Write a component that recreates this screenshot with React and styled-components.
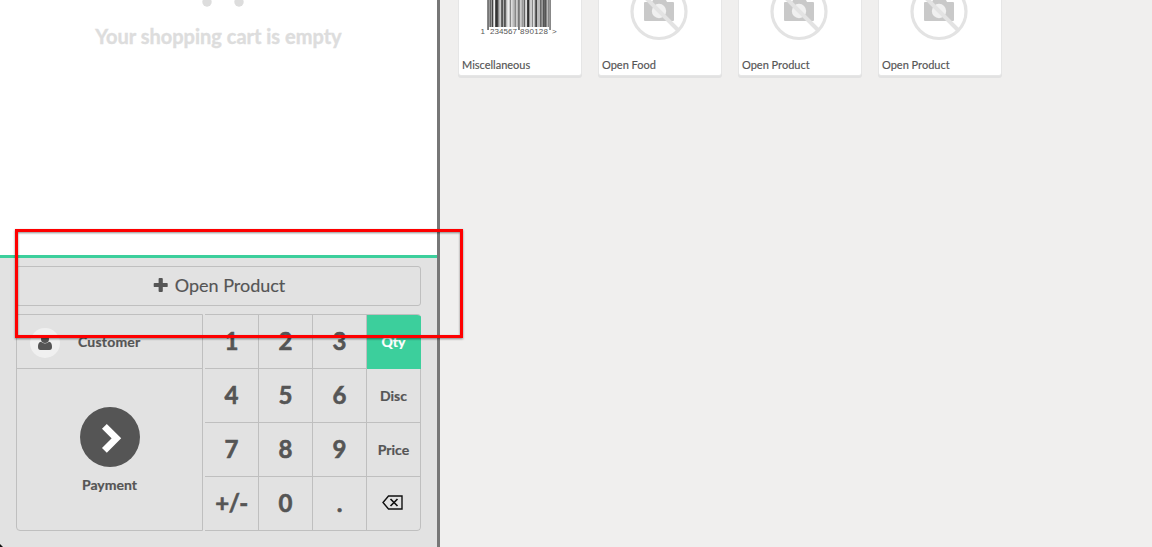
import React from "react";
import styled, { createGlobalStyle } from "styled-components";

const GlobalStyle = createGlobalStyle`
  * { box-sizing: border-box; }
  html, body { margin: 0; padding: 0; height: 100%; overflow: hidden; }
  body { font-family: Lato, "Liberation Sans", sans-serif; color: #555; background: #f0efee; }
  button { font-family: inherit; color: inherit; margin: 0; padding: 0; border: 0; background: none; }
`;

const Screen = styled.div`
  position: relative;
  display: flex;
  width: 1152px;
  height: 547px;
  overflow: hidden;
  background: #f0efee;
`;

const LeftPane = styled.section`
  flex: none;
  display: flex;
  flex-direction: column;
  width: 440px;
  border-right: 3px solid #777;
  background: #fff;
`;

const Order = styled.div`
  display: flex;
  flex-direction: column;
  align-items: center;
  height: 255px;
  color: #ddd;
`;

const CartWheels = styled.svg`
  display: block;
  width: 48px;
  height: 8px;
  margin-left: 9px;
`;

const EmptyText = styled.div`
  margin-top: 16px;
  font-size: 20px;
  line-height: 25px;
  font-weight: 700;
  white-space: nowrap;
  -webkit-text-stroke: 0.4px currentColor;
`;

const Pads = styled.div`
  flex: 1;
  display: flex;
  flex-direction: column;
  gap: 8px;
  padding: 8px 16px 16px;
  border-top: 3px solid #3ccf9c;
  background: #e2e2e2;
`;

const ControlButton = styled.button`
  display: flex;
  align-items: center;
  justify-content: center;
  gap: 7px;
  height: 40px;
  padding: 0 0 2px 1px;
  border: 1px solid #bfbfbf;
  border-radius: 3px;
  font-size: 18px;
  -webkit-text-stroke: 0.15px currentColor;
`;

const PadRow = styled.div`
  display: flex;
  gap: 2px;
`;

const ActionPad = styled.div`
  display: flex;
  flex-direction: column;
  width: 187px;
  height: 217px;
  border: 1px solid #bfbfbf;
  border-radius: 0 0 0 4px;
`;

const CustomerButton = styled.button`
  display: flex;
  align-items: center;
  height: 54px;
  padding-left: 13px;
  gap: 18px;
  border-bottom: 1px solid #bfbfbf;
  font-size: 14px;
  font-weight: 700;
  letter-spacing: 0.2px;
  -webkit-text-stroke: 0.2px currentColor;
`;

const Avatar = styled.span`
  display: flex;
  align-items: center;
  justify-content: center;
  width: 30px;
  height: 30px;
  margin-top: 2px;
  border-radius: 50%;
  background: #f0f0f0;
`;

const PaymentButton = styled.button`
  flex: 1;
  display: flex;
  flex-direction: column;
  align-items: center;
  padding-top: 38px;
  font-size: 14px;
  line-height: 18px;
  font-weight: 700;
  -webkit-text-stroke: 0.2px currentColor;
`;

const PayCircle = styled.span`
  display: block;
  width: 60px;
  height: 60px;
  margin-bottom: 9px;
  border-radius: 50%;
  background: #555;
`;

const NumPad = styled.div`
  display: grid;
  grid-template-columns: repeat(4, 54px);
  grid-auto-rows: 54px;
  height: 217px;
  border-top: 1px solid #bfbfbf;
  border-radius: 0 4px 4px 0;
  overflow: hidden;
`;

const Key = styled.button`
  display: flex;
  align-items: center;
  justify-content: center;
  padding-bottom: ${(p) => (p.$mode ? "0" : "2px")};
  border: solid ${(p) => (p.$selected ? "#3ccf9c" : "#bfbfbf")};
  border-width: 0 1px 1px 0;
  border-radius: ${(p) => p.$radius || "0"};
  background: ${(p) => (p.$selected ? "#3ccf9c" : "transparent")};
  color: ${(p) => (p.$selected ? "#fff" : "#555")};
  font-size: ${(p) => (p.$mode ? "14px" : "24px")};
  font-weight: 700;
  letter-spacing: ${(p) => (p.$tight ? "-0.6px" : "normal")};
  -webkit-text-stroke: ${(p) => (p.$mode ? "0.2px" : "0.6px")} currentColor;
`;

const EraseIcon = styled.svg`
  display: block;
  width: 21px;
  height: 15px;
  margin: 0 2px 2px 0;
`;

const Products = styled.section`
  flex: 1;
  display: flex;
  align-items: flex-start;
  gap: 18px;
  padding-left: 19px;
`;

const Card = styled.article`
  display: flex;
  flex-direction: column;
  width: 122px;
  height: 75px;
  background: #fff;
  border-radius: 0 0 2px 2px;
  box-shadow: 0 0 0 1px #e6e6e6, 0 2px 0 1px #e2e2e2;
`;

const Art = styled.svg`
  display: block;
  width: 122px;
  height: 55px;
`;

const ProductName = styled.div`
  padding-left: 3px;
  margin-top: 3px;
  font-size: 11px;
  line-height: 14px;
  -webkit-text-stroke: 0.15px currentColor;
`;

const Highlight = styled.div`
  position: absolute;
  left: 15px;
  top: 229px;
  width: 448px;
  height: 109px;
  border: 3px solid #fe0000;
  filter: drop-shadow(0 1px 1px rgba(0, 0, 0, 0.45));
  pointer-events: none;
`;

const Pointer = styled.svg`
  position: absolute;
  left: 0;
  bottom: 0;
  width: 3px;
  height: 3px;
`;

const bars = "879694be5348bc65a56bdec8dcba8cb78cb9a6cd439cc8db64bbb6895658b898".split("");

function Barcode() {
  return (
    <Art viewBox="0 0 122 55">
      {bars.map((c, i) => (
        <rect
          key={i}
          x={28 + i}
          y="0"
          width="1"
          height={i < 2 || (i > 30 && i < 33) || i > 61 ? 30 : 27}
          fill={`#${c}${c}${c}`}
        />
      ))}
      <g fill="#555" fontFamily="Liberation Sans, sans-serif" fontSize="8">
        <text x="21.5" y="33.5">1</text>
        <text x="31" y="33.5" textLength="27">234567</text>
        <text x="61" y="33.5" textLength="28">890128</text>
        <text x="93" y="33.5">&gt;</text>
      </g>
    </Art>
  );
}

function NoPhoto() {
  return (
    <Art viewBox="0 0 122 55">
      <path d="M46 2h7l2-4h11l2 4h6q1 0 1 1v17q0 1-1 1H46q-1 0-1-1V3q0-1 1-1z" fill="#c9c9c9" />
      <circle cx="60" cy="11" r="7.2" fill="#f0f0f0" />
      <circle cx="60" cy="11.5" r="27" fill="none" stroke="#e3e3e3" strokeWidth="3.2" />
      <path d="M41-8l38 38" stroke="#e3e3e3" strokeWidth="4" />
    </Art>
  );
}

const keys = ["1", "2", "3", "Qty", "4", "5", "6", "Disc", "7", "8", "9", "Price", "+/-", "0", ".", "back"];
const products = ["Miscellaneous", "Open Food", "Open Product", "Open Product"];

export default function App() {
  return (
    <>
      <GlobalStyle />
      <Screen>
        <LeftPane>
          <Order>
            <CartWheels viewBox="0 0 48 8">
              <circle cx="8" cy="2" r="4.7" fill="#ddd" />
              <circle cx="40" cy="2" r="4.7" fill="#ddd" />
            </CartWheels>
            <EmptyText>Your shopping cart is empty</EmptyText>
          </Order>
          <Pads>
            <ControlButton>
              <svg width="15" height="14" viewBox="0 0 15 14">
                <rect x="5.6" y="0" width="4.2" height="14" rx="0.9" fill="#555" />
                <rect x="0.7" y="4.9" width="14" height="4.2" rx="0.9" fill="#555" />
              </svg>
              Open Product
            </ControlButton>
            <PadRow>
              <ActionPad>
                <CustomerButton>
                  <Avatar>
                    <svg width="14" height="15" viewBox="0 0 14 15">
                      <circle cx="7" cy="4" r="4" fill="#555" />
                      <path d="M3 6.8Q7 10.2 11 6.8C13.3 7 14 9.5 14 12Q14 15 11.5 15h-9Q0 15 0 12C0 9.5 0.7 7 3 6.8z" fill="#555" />
                    </svg>
                  </Avatar>
                  Customer
                </CustomerButton>
                <PaymentButton>
                  <PayCircle>
                    <svg width="60" height="60" viewBox="0 0 60 60">
                      <path d="M24.4 19.3L36.4 31.3 24.4 43.3" fill="none" stroke="#fff" strokeWidth="6.8" />
                    </svg>
                  </PayCircle>
                  Payment
                </PaymentButton>
              </ActionPad>
              <NumPad>
                {keys.map((k, i) => (
                  <Key
                    key={k}
                    $mode={i % 4 === 3}
                    $selected={k === "Qty"}
                    $tight={k === "+/-"}
                    $radius={k === "back" ? "0 0 4px 0" : undefined}
                  >
                    {k === "back" ? (
                      <EraseIcon viewBox="0 0 21 15" fill="none" stroke="#111">
                        <path d="M6.5 1H20v13H6.5L1 7.5z" strokeWidth="1.4" />
                        <path d="M8.5 4l7 7m0-7l-7 7" strokeWidth="1.7" />
                      </EraseIcon>
                    ) : k}
                  </Key>
                ))}
              </NumPad>
            </PadRow>
          </Pads>
        </LeftPane>
        <Products>
          {products.map((name, i) => (
            <Card key={i}>
              {i === 0 ? <Barcode /> : <NoPhoto />}
              <ProductName>{name}</ProductName>
            </Card>
          ))}
        </Products>
        <Highlight />
        <Pointer viewBox="0 0 3 3"><path d="M0 0l3 3H0z" fill="#111" /></Pointer>
      </Screen>
    </>
  );
}
